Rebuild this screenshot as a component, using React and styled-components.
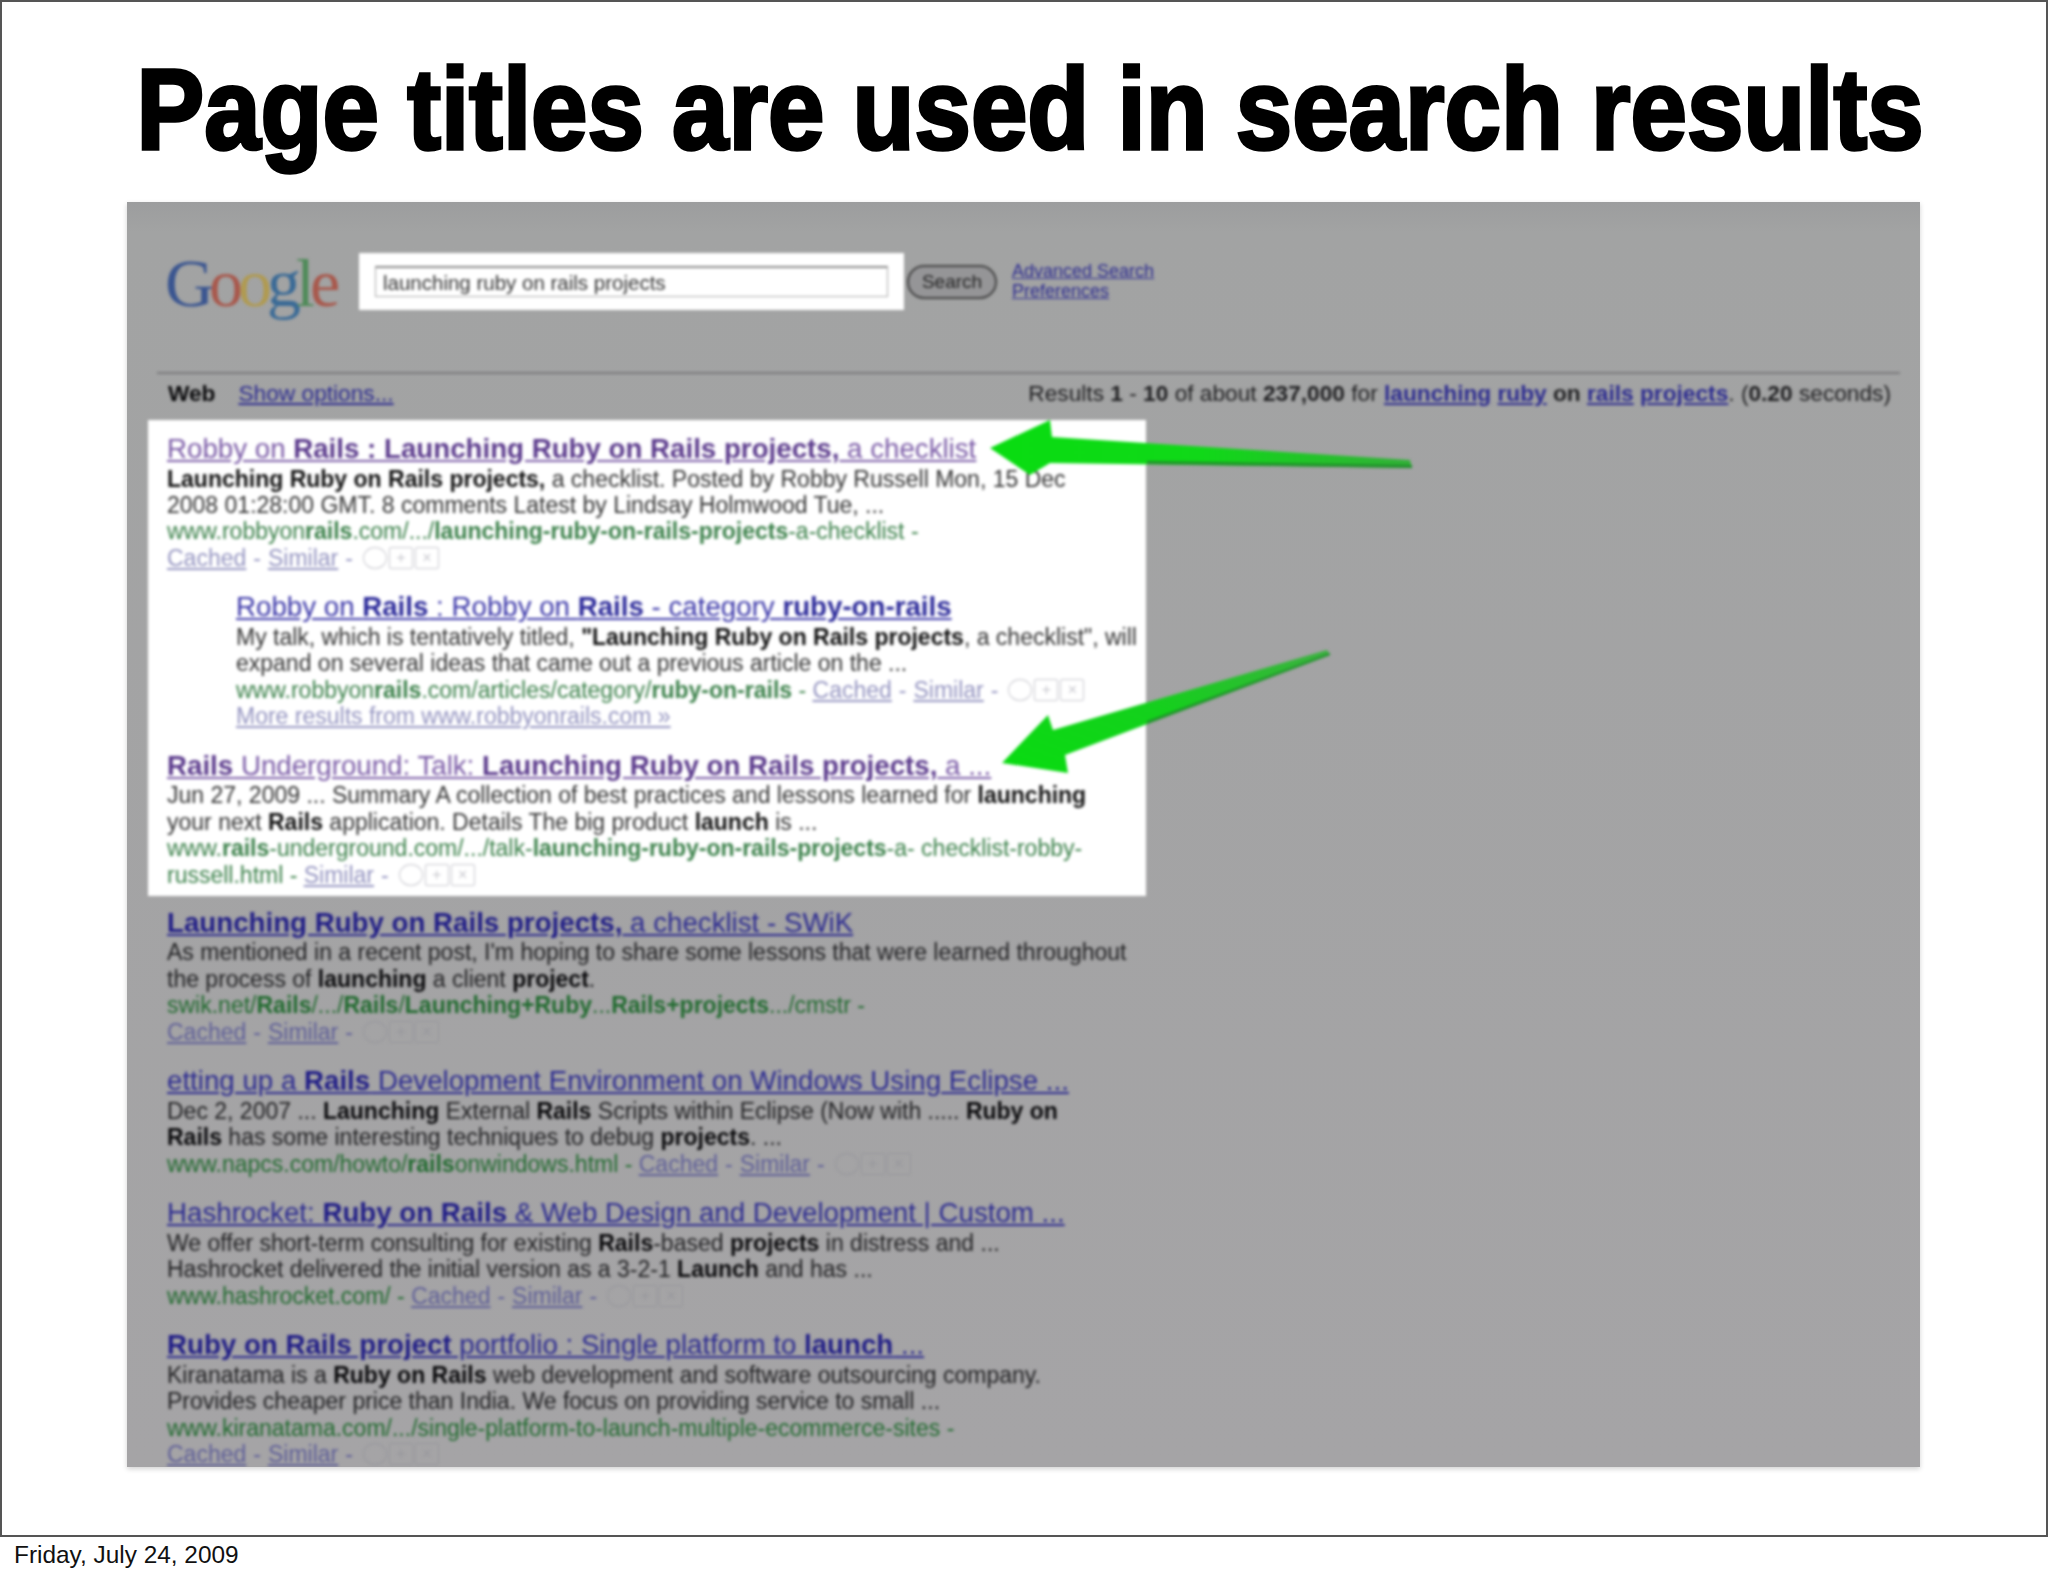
import React from "react";
import styled, { createGlobalStyle } from "styled-components";

const Global = createGlobalStyle`
  html, body { margin: 0; padding: 0; background: #fff; }
  body { width: 2048px; height: 1576px; overflow: hidden; font-family: "Liberation Sans", Arial, sans-serif; }
`;

const Slide = styled.div`
  width: 2048px;
  height: 1537px;
  box-sizing: border-box;
  border: 2px solid #555;
  display: flex;
  flex-direction: column;
  overflow: hidden;
`;
const TitleRow = styled.div`
  height: 200px;
  flex: none;
  display: flex;
  justify-content: center;
  align-items: flex-start;
  padding-left: 13px;
`;
const Title = styled.h1`
  margin: 41.5px 0 0;
  white-space: nowrap;
  font: 700 115px/130px "Liberation Sans", Arial, sans-serif;
  color: #000;
  transform: scaleX(0.882);
  -webkit-text-stroke: 3.5px #000;
`;
const Panel = styled.div`
  position: relative;
  flex: none;
  width: 1793px;
  height: 1265px;
  margin-left: 125px;
  background: linear-gradient(#9c9d9e 0, #a2a3a3 30px, #a5a4a6 100%);
  box-shadow: 0 2px 5px rgba(0,0,0,.18);
  overflow: hidden;
`;
const Blur = styled.div`
  height: 100%;
  box-sizing: border-box;
  padding: 48px 0 0 21px;
  filter: blur(1.4px);
  --link: #2b2a90;
  --linkbold: #1f1c86;
  --text: #1e1e20;
  --strong: #08080a;
  --url: #206a2e;
  --faint: #5f5f98;
  --tool: #97979c;
`;
const Header = styled.div`
  display: flex;
  align-items: flex-start;
  height: 122px;
`;
const Logo = styled.div`
  width: 195px;
  font: 400 68px/66px "Liberation Serif", serif;
  letter-spacing: -5px;
  margin-left: 17px;
  color: #3a5590;
  span:nth-child(2) { color: #a8584c; }
  span:nth-child(3) { color: #b09a50; }
  span:nth-child(4) { color: #3a6a96; }
  span:nth-child(5) { color: #4e8a58; }
  span:nth-child(6) { color: #a8584c; }
`;
const SearchBox = styled.div`
  width: 545px;
  height: 57px;
  margin: 3px 0 0 -1px;
  background: #fff;
  box-sizing: border-box;
  padding: 13px 16px;
`;
const SearchInput = styled.div`
  height: 31px;
  box-sizing: border-box;
  border: 1px solid #aaa;
  border-top: 2px solid #888;
  padding-left: 7px;
  font: 400 20.5px/29px "Liberation Sans", sans-serif;
  color: #333;
`;
const SearchButton = styled.div`
  width: 90px;
  height: 34px;
  margin: 15px 0 0 3px;
  box-sizing: border-box;
  border: 2px solid #444;
  border-radius: 17px;
  background: #959597;
  text-align: center;
  font: 400 19px/29px "Liberation Sans", sans-serif;
  color: #222;
`;
const HeaderLinks = styled.div`
  margin: 11px 0 0 15px;
  display: flex;
  flex-direction: column;
  font: 400 18px/20px "Liberation Sans", sans-serif;
  color: var(--link);
  text-decoration: underline;
`;
const Bar = styled.div`
  margin: 0 20px 0 9px;
  border-top: 2px solid #7b7b7d;
  height: 44px;
  box-sizing: content-box;
  display: flex;
  align-items: flex-start;
  padding: 7px 9px 0 11px;
  height: 37px;
  justify-content: space-between;
  font: 400 22.7px/24px "Liberation Sans", sans-serif;
  color: var(--text);
`;
const BarLeft = styled.div`
  display: flex;
  gap: 23px;
  b { color: var(--strong); }
`;
const Lk = styled.span`
  color: var(--link);
  text-decoration: underline;
`;
const Spotlight = styled.div`
  width: 998px;
  box-sizing: border-box;
  padding: 12px 0 8px 19px;
  background: #fff;
  margin-top: 2px;
  --link: #3a36a8;
  --linkbold: #2c2a9a;
  --visited: #7a5aa6;
  --visitedbold: #5b3a8c;
  --text: #333;
  --strong: #101010;
  --url: #3a8049;
  --faint: #9494c0;
  --tool: #c9c9cf;
`;
const Result = styled.div`
  margin-top: ${p => (p.$first ? 0 : 19.3)}px;
  margin-left: ${p => (p.$indent ? 69 : 0)}px;
  white-space: nowrap;
`;
const Rest = styled.div`
  padding: 10px 0 0 19px;
`;
const Head = styled.div`
  font: 400 27.7px/33.5px "Liberation Sans", sans-serif;
  color: ${p => (p.$visited ? "var(--visited)" : "var(--link)")};
  text-decoration: underline;
  b { color: ${p => (p.$visited ? "var(--visitedbold)" : "var(--linkbold)")}; }
`;
const Line = styled.div`
  font: 400 23px/26.4px "Liberation Sans", sans-serif;
  color: var(--text);
  b { color: var(--strong); }
`;
const Url = styled(Line)`
  color: var(--url);
  b { color: var(--url); }
`;
const Inline = styled.span`
  color: var(--url);
  b { color: var(--url); }
`;
const Faint = styled.span`
  color: var(--faint);
  text-decoration: underline;
`;
const Sep = styled.span`
  color: var(--faint);
  padding: 0 7px;
`;
const Tools = styled.span`
  display: inline-flex;
  gap: 2px;
  margin-left: 3px;
  vertical-align: -3px;
`;
const Tool = styled.span`
  width: 24px;
  height: 22px;
  box-sizing: border-box;
  border: 1px solid var(--tool);
  border-radius: ${p => (p.$round ? "50%" : "2px")};
  font: 400 16px/20px "Liberation Sans", sans-serif;
  text-align: center;
  color: var(--tool);
`;
const Arrows = styled.svg`
  position: absolute;
  left: 0;
  top: 0;
  width: 1793px;
  height: 1265px;
  pointer-events: none;
`;
const Footer = styled.div`
  height: 39px;
  padding-left: 14px;
  font: 400 24.4px/36px "Liberation Sans", sans-serif;
  color: #111;
`;

const ToolSet = () => (
  <Tools>
    <Tool $round />
    <Tool>+</Tool>
    <Tool>×</Tool>
  </Tools>
);
const Links = ({ cached = true }) => (
  <>
    {cached && <Faint>Cached</Faint>}
    {cached && <Sep>-</Sep>}
    <Faint>Similar</Faint>
    <Sep>-</Sep>
    <ToolSet />
  </>
);

export default function App() {
  return (
    <>
      <Global />
      <Slide>
        <TitleRow>
          <Title>Page titles are used in search results</Title>
        </TitleRow>
        <Panel>
          <Blur>
            <Header>
              <Logo>
                <span>G</span><span>o</span><span>o</span><span>g</span><span>l</span><span>e</span>
              </Logo>
              <SearchBox>
                <SearchInput>launching ruby on rails projects</SearchInput>
              </SearchBox>
              <SearchButton>Search</SearchButton>
              <HeaderLinks>
                <span>Advanced Search</span>
                <span>Preferences</span>
              </HeaderLinks>
            </Header>
            <Bar>
              <BarLeft>
                <b>Web</b>
                <Lk>Show options...</Lk>
              </BarLeft>
              <div>
                Results <b>1</b> - <b>10</b> of about <b>237,000</b> for <Lk><b>launching</b></Lk> <Lk><b>ruby</b></Lk> <b>on</b> <Lk><b>rails</b></Lk> <Lk><b>projects</b></Lk>. (<b>0.20</b> seconds)
              </div>
            </Bar>
            <Spotlight>
              <Result $first>
                <Head $visited>Robby on <b>Rails : Launching Ruby on Rails projects,</b> a checklist</Head>
                <Line><b>Launching Ruby on Rails projects,</b> a checklist. Posted by Robby Russell Mon, 15 Dec</Line>
                <Line>2008 01:28:00 GMT. 8 comments Latest by Lindsay Holmwood Tue, ...</Line>
                <Url>www.robbyon<b>rails</b>.com/.../<b>launching-ruby-on-rails-projects</b>-a-checklist -</Url>
                <Line><Links /></Line>
              </Result>
              <Result $indent>
                <Head>Robby on <b>Rails</b> : Robby on <b>Rails</b> - category <b>ruby-on-rails</b></Head>
                <Line>My talk, which is tentatively titled, <b>"Launching Ruby on Rails projects</b>, a checklist", will</Line>
                <Line>expand on several ideas that came out a previous article on the ...</Line>
                <Line><Inline>www.robbyon<b>rails</b>.com/articles/category/<b>ruby-on-rails</b> - </Inline><Links /></Line>
                <Line><Faint>More results from www.robbyonrails.com »</Faint></Line>
              </Result>
              <Result>
                <Head $visited><b>Rails</b> Underground: Talk: <b>Launching Ruby on Rails projects,</b> a ...</Head>
                <Line>Jun 27, 2009 ... Summary A collection of best practices and lessons learned for <b>launching</b></Line>
                <Line>your next <b>Rails</b> application. Details The big product <b>launch</b> is ...</Line>
                <Url>www.<b>rails</b>-underground.com/.../talk-<b>launching-ruby-on-rails-projects</b>-a- checklist-robby-</Url>
                <Line><Inline>russell.html - </Inline><Links cached={false} /></Line>
              </Result>
            </Spotlight>
            <Rest>
              <Result $first>
                <Head><b>Launching Ruby on Rails projects,</b> a checklist - SWiK</Head>
                <Line>As mentioned in a recent post, I'm hoping to share some lessons that were learned throughout</Line>
                <Line>the process of <b>launching</b> a client <b>project</b>.</Line>
                <Url>swik.net/<b>Rails</b>/.../<b>Rails</b>/<b>Launching+Ruby</b>...<b>Rails+projects</b>.../cmstr -</Url>
                <Line><Links /></Line>
              </Result>
              <Result>
                <Head>etting up a <b>Rails</b> Development Environment on Windows Using Eclipse ...</Head>
                <Line>Dec 2, 2007 ... <b>Launching</b> External <b>Rails</b> Scripts within Eclipse (Now with ..... <b>Ruby on</b></Line>
                <Line><b>Rails</b> has some interesting techniques to debug <b>projects</b>. ...</Line>
                <Line><Inline>www.napcs.com/howto/<b>rails</b>onwindows.html - </Inline><Links /></Line>
              </Result>
              <Result>
                <Head>Hashrocket: <b>Ruby on Rails</b> &amp; Web Design and Development | Custom ...</Head>
                <Line>We offer short-term consulting for existing <b>Rails</b>-based <b>projects</b> in distress and ...</Line>
                <Line>Hashrocket delivered the initial version as a 3-2-1 <b>Launch</b> and has ...</Line>
                <Line><Inline>www.hashrocket.com/ - </Inline><Links /></Line>
              </Result>
              <Result>
                <Head><b>Ruby on Rails project</b> portfolio : Single platform to <b>launch</b> ...</Head>
                <Line>Kiranatama is a <b>Ruby on Rails</b> web development and software outsourcing company.</Line>
                <Line>Provides cheaper price than India. We focus on providing service to small ...</Line>
                <Url>www.kiranatama.com/.../single-platform-to-launch-multiple-ecommerce-sites -</Url>
                <Line><Links /></Line>
              </Result>
            </Rest>
            <Arrows viewBox="0 0 1793 1265">
              <defs>
                <linearGradient id="a1" x1="0" x2="1" y1="0" y2="0">
                  <stop offset="0" stopColor="#08dc10" />
                  <stop offset="0.5" stopColor="#10d818" />
                  <stop offset="1" stopColor="#32b038" />
                </linearGradient>
                <linearGradient id="a2" x1="0" x2="1" y1="1" y2="0">
                  <stop offset="0" stopColor="#08dc10" />
                  <stop offset="0.5" stopColor="#14d01c" />
                  <stop offset="1" stopColor="#3cb040" />
                </linearGradient>
              </defs>
              <polygon fill="url(#a1)" points="863,246 923,218 925,235 1283,258 1285,266 923,261 903,273" />
              <polygon fill="#1f8f2a" points="1020,259 1285,263 1285,266 1020,262" />
              <polygon fill="url(#a2)" points="875,561 921,513 926,528 1200,448 1203,453 938,553 941,571" />
              <polygon fill="#1f8f2a" points="1020,519 1203,451 1203,453 1020,522" />
            </Arrows>
          </Blur>
        </Panel>
      </Slide>
      <Footer>Friday, July 24, 2009</Footer>
    </>
  );
}
